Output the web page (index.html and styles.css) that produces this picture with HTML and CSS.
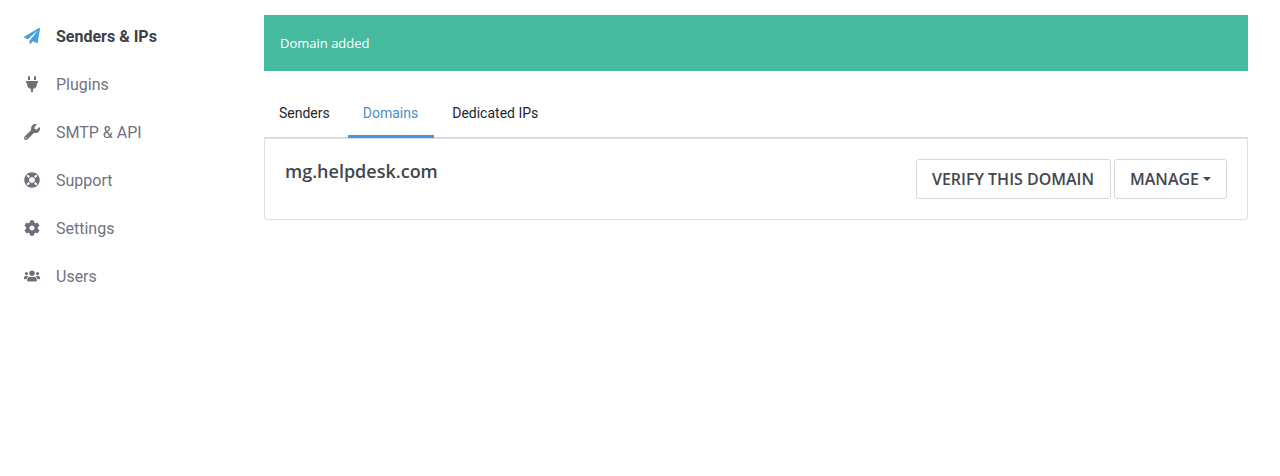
FILE: index.html
```html
<!DOCTYPE html>
<html lang="en">
<head>
<meta charset="utf-8">
<title>Senders &amp; IPs</title>
<link rel="stylesheet" href="styles.css">
</head>
<body>
<div class="app">
  <nav class="sidebar">
    <a class="nav-item active"><svg class="icon" viewBox="0 0 512 512"><path d="M476 3.2L12.5 270.6c-18.1 10.4-15.8 35.6 2.2 43.2L121 358.4l287.3-253.2c5.5-4.9 13.3 2.6 8.6 8.3L176 407v80.5c0 23.6 28.5 32.9 42.5 15.8L282 426l124.6 52.2c14.2 6 30.4-2.9 33-18.2l72-432C515 7.8 493.3-6.8 476 3.2z"/></svg><span>Senders &amp; IPs</span></a>
    <a class="nav-item"><svg class="icon" viewBox="0 0 384 512"><path d="M320,32a32,32,0,0,0-64,0v96h64Zm48,128H16A16,16,0,0,0,0,176v32a16,16,0,0,0,16,16H32v32A160.07,160.07,0,0,0,160,412.8V512h64V412.8A160.07,160.07,0,0,0,352,256V224h16a16,16,0,0,0,16-16V176A16,16,0,0,0,368,160ZM128,32a32,32,0,0,0-64,0v96h64Z"/></svg><span>Plugins</span></a>
    <a class="nav-item"><svg class="icon" viewBox="0 0 512 512"><path d="M507.73 109.1c-2.24-9.03-13.54-12.09-20.12-5.51l-74.36 74.36-67.88-11.31-11.31-67.88 74.36-74.36c6.62-6.62 3.43-17.9-5.66-20.16-47.38-11.74-99.55.91-136.58 37.93-39.64 39.64-50.55 97.1-34.05 147.2L18.74 402.76c-24.99 24.99-24.99 65.51 0 90.5 24.99 24.99 65.51 24.99 90.5 0l213.21-213.21c50.12 16.71 107.47 5.68 147.37-34.22 37.07-37.07 49.7-89.32 37.91-136.73zM64 472c-13.25 0-24-10.75-24-24 0-13.26 10.75-24 24-24s24 10.74 24 24c0 13.25-10.75 24-24 24z"/></svg><span>SMTP &amp; API</span></a>
    <a class="nav-item"><svg class="icon" viewBox="0 0 512 512"><path d="M256 8C119.033 8 8 119.033 8 256s111.033 248 248 248 248-111.033 248-248S392.967 8 256 8zm173.696 119.559l-63.399 63.399c-10.987-18.559-26.67-34.252-45.255-45.255l63.399-63.399a218.396 218.396 0 0 1 45.255 45.255zM256 352c-53.019 0-96-42.981-96-96s42.981-96 96-96 96 42.981 96 96-42.981 96-96 96zM127.559 82.304l63.399 63.399c-18.559 10.987-34.252 26.67-45.255 45.255l-63.399-63.399a218.372 218.372 0 0 1 45.255-45.255zM82.304 384.441l63.399-63.399c10.987 18.559 26.67 34.252 45.255 45.255l-63.399 63.399a218.396 218.396 0 0 1-45.255-45.255zm302.137 45.255l-63.399-63.399c18.559-10.987 34.252-26.67 45.255-45.255l63.399 63.399a218.403 218.403 0 0 1-45.255 45.255z"/></svg><span>Support</span></a>
    <a class="nav-item"><svg class="icon" viewBox="0 0 512 512"><path d="M487.4 315.7l-42.6-24.6c4.3-23.2 4.3-47 0-70.2l42.6-24.6c4.9-2.8 7.1-8.6 5.5-14-11.1-35.6-30-67.8-54.7-94.6-3.8-4.1-10-5.1-14.8-2.3L380.8 110c-17.9-15.4-38.5-27.3-60.8-35.1V25.8c0-5.6-3.9-10.5-9.4-11.7-36.7-8.2-74.3-7.8-109.2 0-5.5 1.2-9.4 6.1-9.4 11.7V75c-22.2 7.9-42.8 19.8-60.8 35.1L88.7 85.5c-4.9-2.8-11-1.9-14.8 2.3-24.7 26.7-43.6 58.9-54.7 94.6-1.7 5.4.6 11.2 5.5 14L67.3 221c-4.3 23.2-4.3 47 0 70.2l-42.6 24.6c-4.9 2.8-7.1 8.6-5.5 14 11.1 35.6 30 67.8 54.7 94.6 3.8 4.1 10 5.1 14.8 2.3l42.6-24.6c17.9 15.4 38.5 27.3 60.8 35.1v49.2c0 5.6 3.9 10.5 9.4 11.7 36.7 8.2 74.3 7.8 109.2 0 5.5-1.2 9.4-6.1 9.4-11.7v-49.2c22.2-7.9 42.8-19.8 60.8-35.1l42.6 24.6c4.9 2.8 11 1.9 14.8-2.3 24.7-26.7 43.6-58.9 54.7-94.6 1.5-5.5-.7-11.3-5.6-14.1zM256 336c-44.1 0-80-35.9-80-80s35.9-80 80-80 80 35.9 80 80-35.9 80-80 80z"/></svg><span>Settings</span></a>
    <a class="nav-item"><svg class="icon" viewBox="0 0 640 512"><path d="M96 224c35.3 0 64-28.7 64-64s-28.7-64-64-64-64 28.7-64 64 28.7 64 64 64zm448 0c35.3 0 64-28.7 64-64s-28.7-64-64-64-64 28.7-64 64 28.7 64 64 64zm32 32h-64c-17.6 0-33.5 7.1-45.1 18.6 40.3 22.1 68.9 62 75.1 109.4h66c17.7 0 32-14.3 32-32v-32c0-35.3-28.7-64-64-64zm-256 0c61.9 0 112-50.1 112-112S381.9 32 320 32 208 82.1 208 144s50.1 112 112 112zm76.8 32h-8.3c-20.8 10-43.9 16-68.5 16s-47.6-6-68.5-16h-8.3C179.6 288 128 339.6 128 403.2V432c0 26.5 21.5 48 48 48h288c26.5 0 48-21.5 48-48v-28.8c0-63.6-51.6-115.2-115.2-115.2zm-223.7-13.4C161.5 263.1 145.6 256 128 256H64c-35.3 0-64 28.7-64 64v32c0 17.7 14.3 32 32 32h65.9c6.3-47.4 34.9-87.3 75.2-109.4z"/></svg><span>Users</span></a>
  </nav>
  <main class="main">
    <div class="alert">Domain added</div>
    <ul class="tabs">
      <li class="tab">Senders</li>
      <li class="tab active">Domains</li>
      <li class="tab">Dedicated IPs</li>
    </ul>
    <section class="card">
      <h2 class="domain">mg.helpdesk.com</h2>
      <div class="actions">
        <button class="btn btn-verify">VERIFY THIS DOMAIN</button>
        <button class="btn">MANAGE<i class="caret"></i></button>
      </div>
    </section>
  </main>
</div>
</body>
</html>
```
FILE: styles.css
```css
* { box-sizing: border-box; }
html, body { margin: 0; padding: 0; background: #fff; }
body { font-family: Roboto, "Liberation Sans", sans-serif; height: 476px; overflow: hidden; }
.app { display: flex; align-items: flex-start; }
.sidebar { width: 264px; flex: none; padding: 12px 0 0 24px; display: flex; flex-direction: column; }
.nav-item { display: flex; align-items: center; height: 48px; font-size: 16px; color: #6f7380; }
.nav-item span { margin-left: 8px; }
.nav-item.active { color: #3d4049; font-weight: 700; }
.icon { width: 16px; height: 16px; margin-right: 8px; fill: #6d7079; flex: none; }
.nav-item.active .icon { fill: #4a9fe0; }
.main { flex: 1; padding: 15px 32px 0 0; min-width: 0; }
.alert { height: 56px; background: #47bb9f; color: #fff; font-size: 13px; line-height: 56px; padding-left: 16px; font-family: "Open Sans", sans-serif; }
.tabs { list-style: none; margin: 18px 0 0; padding: 0; display: flex; gap: 3px; height: 49px; border-bottom: 1px solid #d4d6da; }
.tab { padding: 0 15px; height: 49px; line-height: 48px; font-size: 14px; color: #23262b; }
.tab.active { padding-right: 16px; color: #4a90c4; border-bottom: 3px solid #4a94dc; }
.card { height: 82px; border: 1px solid #dddfe3; border-radius: 0 0 3px 3px; padding: 20px; display: flex; justify-content: space-between; align-items: flex-start; }
.domain { margin: 0; font-family: "Open Sans", sans-serif; font-size: 18px; font-weight: 600; color: #43464e; line-height: 24px; }
.actions { display: flex; gap: 3px; }
.btn { height: 40px; padding: 0 15px; background: #fff; border: 1px solid #d6d8dc; border-radius: 3px; font-family: "Open Sans", sans-serif; font-size: 16px; font-weight: 600; color: #43464e; display: flex; align-items: center; }
.btn-verify { padding-right: 16px; }
.caret { display: inline-block; margin-left: 4px; border-top: 4px solid #43464e; border-left: 4px solid transparent; border-right: 4px solid transparent; }
```
